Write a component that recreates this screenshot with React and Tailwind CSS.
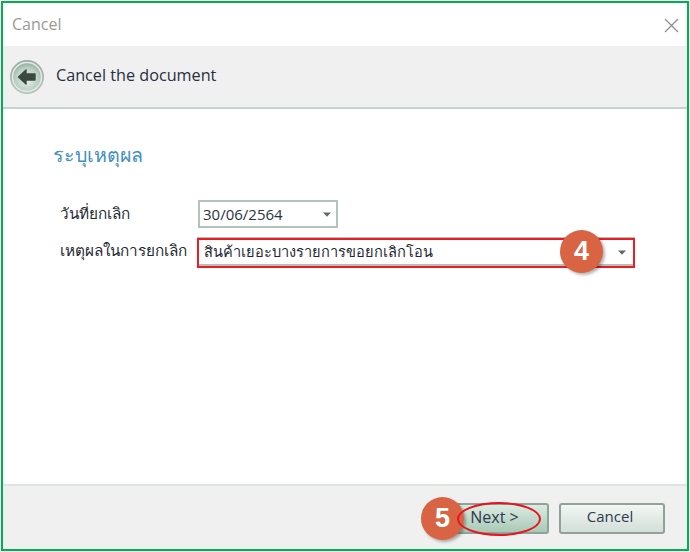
const font = { fontFamily: '"Open Sans", "Noto Sans", "Liberation Sans", sans-serif' };

function Caret() {
  return (
    <svg width="8" height="5" viewBox="0 0 8 5" className="shrink-0">
      <path d="M0 0.5h8L4 4.8z" fill="#5f6b66" />
    </svg>
  );
}

function BackIcon() {
  return (
    <svg width="36" height="36" viewBox="0 0 36 36">
      <defs>
        <linearGradient id="ring" x1="0" y1="0" x2="0" y2="1">
          <stop offset="0" stopColor="#9aaaa2" />
          <stop offset="1" stopColor="#b8c6be" />
        </linearGradient>
        <radialGradient id="face" cx="0.5" cy="0.6" r="0.6">
          <stop offset="0" stopColor="#e6f0ea" />
          <stop offset="0.7" stopColor="#b9cdc2" />
          <stop offset="1" stopColor="#93a99d" />
        </radialGradient>
      </defs>
      <circle cx="18" cy="18" r="17" fill="url(#ring)" />
      <circle cx="18" cy="18" r="14.5" fill="url(#face)" stroke="#e3ebe6" strokeWidth="1.5" />
      <path d="M9.5 18 L17 11 L17 15 L26 15 L26 21 L17 21 L17 25 Z" fill="#3a4a42" strokeLinejoin="round" stroke="#3a4a42" strokeWidth="1.4" />
    </svg>
  );
}

function Badge({ n, className }) {
  return (
    <div className={`absolute flex h-[43px] w-[43px] items-center justify-center rounded-full bg-[#d96443] text-[27px] font-bold text-white shadow-[2px_2px_3px_rgba(0,0,0,0.3)] ${className}`} style={{ fontFamily: '"Liberation Sans", sans-serif' }}>
      {n}
    </div>
  );
}

function Button({ children, className }) {
  return (
    <button className={`flex h-[31px] items-center justify-center rounded-[3px] border-2 border-[#8fa398] pb-[4px] text-[#2e3a4e] ${className}`} style={font}>
      {children}
    </button>
  );
}

export default function App() {
  return (
    <div className="relative h-[552px] w-[690px] overflow-hidden bg-white p-px" style={font}>
      <div className="flex h-[550px] w-[688px] flex-col border-2 border-[#00b050] bg-white">
        <div className="flex h-[43px] shrink-0 items-center justify-between pl-[9px] pr-[8px]">
          <span className="pb-[2px] text-[16px] text-[#9a9a9a]">Cancel</span>
          <svg width="15" height="15" viewBox="0 0 15 15" className="mt-[2px]">
            <path d="M1 1L14 14M14 1L1 14" stroke="#8f8f8f" strokeWidth="1.3" />
          </svg>
        </div>
        <div className="flex h-[63px] shrink-0 items-center gap-[11px] border-b-2 border-[#c3d5ca] bg-[#f0f0f0] pl-[6px]">
          <BackIcon />
          <span className="pb-[2px] text-[16.2px] font-medium text-[#27303f]">Cancel the document</span>
        </div>
        <div className="flex-1 pl-[50px] pt-[32px]">
          <div className="text-[19.6px] font-medium leading-[28px] text-[#3f8fc0]">ระบุเหตุผล</div>
          <div className="mt-[31px] flex flex-col gap-[10px] pl-[7px]">
            <div className="flex h-[28px] items-center">
              <span className="w-[138px] pb-[2px] text-[15.3px] font-medium text-[#1f2933]">วันที่ยกเลิก</span>
              <div className="flex h-[28px] w-[140px] items-center justify-between border-2 border-[#b2c4ba] bg-white pl-[3px] pr-[5px] text-[15px] text-[#2b3340]">
                <span>30/06/2564</span>
                <Caret />
              </div>
            </div>
            <div className="flex h-[30px] items-center">
              <span className="w-[137px] pb-[5px] text-[15.3px] font-medium text-[#1f2933]">เหตุผลในการยกเลิก</span>
              <div className="h-[30px] w-[438px] border-2 border-[#ec1c24] bg-white shadow-[0_-1px_0_#b2c4ba]">
                <div className="flex h-[26px] items-center justify-between border-b-2 border-[#b2c4ba] pl-[5px] pr-[7px] text-[14.6px] font-medium text-[#1f2933]">
                  <span>สินค้าเยอะบางรายการขอยกเลิกโอน</span>
                  <Caret />
                </div>
              </div>
            </div>
          </div>
        </div>
        <div className="flex h-[65px] shrink-0 items-center justify-end gap-[10px] border-t-2 border-[#dfe6e2] bg-[#f0f0f0] pr-[22px] pt-[2px]">
          <Button className="w-[97px] bg-gradient-to-b from-[#dcebe2] to-[#a9c9b6] pr-[12px] text-[16px]">Next &gt;</Button>
          <Button className="w-[106px] bg-gradient-to-b from-[#f2f6f4] to-[#d3dfd8] pr-[4px] text-[15px]">Cancel</Button>
        </div>
      </div>
      <Badge n="4" className="left-[560px] top-[230px]" />
      <Badge n="5" className="left-[421px] top-[497px]" />
      <div className="absolute left-[457px] top-[502px] h-[34px] w-[84px] rounded-[50%] border-2 border-[#e5141f]" />
    </div>
  );
}
